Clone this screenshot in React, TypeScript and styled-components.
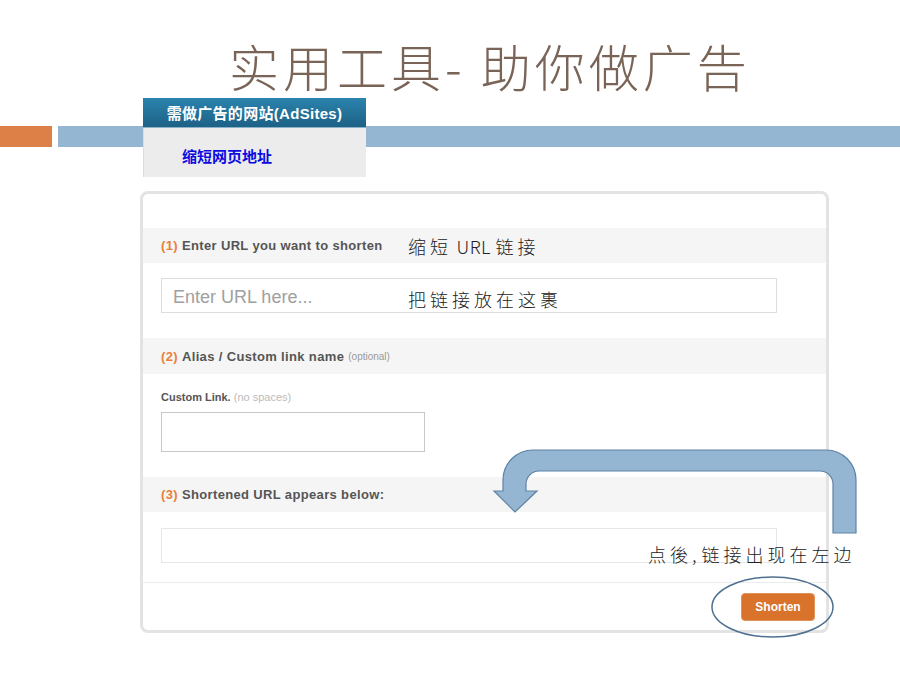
import React from "react";
import styled, { createGlobalStyle } from "styled-components";

const Global = createGlobalStyle`
  html, body { margin: 0; padding: 0; background: #ffffff; }
  body { font-family: "Liberation Sans", Arial, "Noto Sans CJK SC", sans-serif; }
  * { box-sizing: border-box; }
`;

const Slide = styled.div`
  position: relative;
  width: 900px;
  height: 675px;
  overflow: hidden;
  background: #ffffff;
`;

const Title = styled.h1`
  margin: 0;
  height: 98px;
  padding: 38px 0 0 229px;
  font-family: "Noto Sans CJK SC", "Noto Sans CJK JP", sans-serif;
  font-weight: 300;
  font-size: 50px;
  line-height: 54px;
  letter-spacing: 4px;
  color: #7a6457;
  white-space: nowrap;
`;

const HeaderStack = styled.div`
  display: grid;
  height: 79px;
  & > * { grid-area: 1 / 1; }
`;

const Bars = styled.div`
  display: flex;
  gap: 6px;
  margin-top: 28px;
  height: 21px;
  align-self: start;
`;

const Block = styled.div<{ $color: string; $width?: number }>`
  background: ${(p) => p.$color};
  ${(p) => (p.$width ? `width: ${p.$width}px;` : "flex: 1;")}
`;

const Tab = styled.div`
  margin-left: 143px;
  width: 223px;
  display: flex;
  flex-direction: column;
`;

const TabHead = styled.div`
  height: 30px;
  background: linear-gradient(#2b83ad, #1d6186);
  border-bottom: 1px solid #8cb2c8;
  color: #ffffff;
  font-weight: bold;
  font-size: 15px;
  letter-spacing: 0.3px;
  display: flex;
  align-items: center;
  justify-content: center;
  font-family: "Liberation Sans", "Noto Sans CJK SC", sans-serif;
`;

const TabBody = styled.div`
  height: 49px;
  background: #ececec;
  border-left: 1px solid #dcdcdc;
  padding: 18px 0 0 38px;
  display: flex;
  align-items: flex-start;
`;

const TabLink = styled.span`
  color: #0a0ae0;
  font-weight: bold;
  font-size: 15px;
  line-height: 20px;
  font-family: "Noto Sans CJK SC", sans-serif;
`;

const Card = styled.div`
  margin: 14px 0 0 140px;
  width: 689px;
  height: 442px;
  border: 3px solid #e3e3e3;
  border-radius: 8px;
  padding-top: 34px;
  background: #ffffff;
`;

const SectionHead = styled.div<{ $h?: number }>`
  height: ${(p) => p.$h ?? 35}px;
  background: #f5f5f5;
  padding-left: 18px;
  display: flex;
  align-items: center;
  gap: 4px;
  font-size: 13px;
  letter-spacing: 0.35px;
  font-weight: bold;
  color: #555555;
  white-space: nowrap;
`;

const Num = styled.span`
  color: #e8803a;
`;

const Small = styled.span<{ $size?: number; $color?: string }>`
  font-weight: normal;
  letter-spacing: 0;
  font-size: ${(p) => p.$size ?? 10}px;
  color: ${(p) => p.$color ?? "#999999"};
`;

const Field = styled.div<{ $top: number; $bottom: number }>`
  padding: ${(p) => p.$top}px 18px ${(p) => p.$bottom}px;
  display: flex;
  flex-direction: column;
  gap: 8px;
`;

const Label = styled.div`
  font-size: 11px;
  line-height: 14px;
  font-weight: bold;
  color: #555555;
`;

const Input = styled.div<{ $w: number; $h: number; $border: string }>`
  width: ${(p) => p.$w}px;
  height: ${(p) => p.$h}px;
  border: 1px solid ${(p) => p.$border};
  background: #ffffff;
  display: flex;
  align-items: center;
  padding: 3px 0 0 11px;
  font-size: 18px;
  color: #a0a0a0;
`;

const Footer = styled.div`
  border-top: 1px solid #ececec;
  display: flex;
  justify-content: flex-end;
  padding: 10px 11px 0;
`;

const Button = styled.div`
  width: 74px;
  height: 28px;
  border-radius: 4px;
  background: #d9732b;
  border: 1px solid #e0925a;
  color: #ffffff;
  font-weight: bold;
  font-size: 12px;
  display: flex;
  align-items: center;
  justify-content: center;
`;

const Note = styled.div<{ $x: number; $y: number }>`
  position: absolute;
  left: ${(p) => p.$x}px;
  top: ${(p) => p.$y}px;
  font-family: "Noto Sans CJK SC", sans-serif;
  font-weight: 300;
  font-size: 18px;
  line-height: 24px;
  letter-spacing: 4px;
  color: #222222;
  white-space: nowrap;
`;

const Tight = styled.span`
  letter-spacing: 0.5px;
`;

const Overlay = styled.svg`
  position: absolute;
  left: 0;
  top: 0;
  pointer-events: none;
`;

export default function App() {
  return (
    <>
      <Global />
      <Slide>
        <Title>实用工具- 助你做广告</Title>
        <HeaderStack>
          <Bars>
            <Block $color="#dd8047" $width={52} />
            <Block $color="#94b6d2" />
          </Bars>
          <Tab>
            <TabHead>需做广告的网站(AdSites)</TabHead>
            <TabBody>
              <TabLink>缩短网页地址</TabLink>
            </TabBody>
          </Tab>
        </HeaderStack>
        <Card>
          <SectionHead>
            <Num>(1)</Num> Enter URL you want to shorten
          </SectionHead>
          <Field $top={15} $bottom={25}>
            <Input $w={616} $h={35} $border="#dddddd">Enter URL here...</Input>
          </Field>
          <SectionHead $h={36}>
            <Num>(2)</Num> Alias / Custom link name <Small>(optional)</Small>
          </SectionHead>
          <Field $top={16} $bottom={25}>
            <Label>
              Custom Link. <Small $size={11} $color="#bbbbbb">(no spaces)</Small>
            </Label>
            <Input $w={264} $h={40} $border="#c8c8c8" />
          </Field>
          <SectionHead>
            <Num>(3)</Num> Shortened URL appears below:
          </SectionHead>
          <Field $top={16} $bottom={19}>
            <Input $w={616} $h={35} $border="#e6e6e6" />
          </Field>
          <Footer>
            <Button>Shorten</Button>
          </Footer>
        </Card>
        <Overlay width={900} height={675} viewBox="0 0 900 675">
          <path
            d="M 856 533 L 856 480 A 30 30 0 0 0 826 450 L 533 450 A 30 30 0 0 0 503 480 L 503 491 L 494 491 L 515 512 L 537 491 L 526 491 L 526 484 A 13 13 0 0 1 539 471 L 820 471 A 13 13 0 0 1 833 484 L 833 533 Z"
            fill="#94b6d2"
            stroke="#5f82a3"
            strokeWidth={1.2}
          />
          <ellipse cx={772.5} cy={607} rx={60.5} ry={30} fill="none" stroke="#4f7090" strokeWidth={1.5} />
        </Overlay>
        <Note $x={408} $y={234}>
          缩短<Tight> URL </Tight>链接
        </Note>
        <Note $x={408} $y={287}>把链接放在这裹</Note>
        <Note $x={648} $y={542}>
          点後<Tight>, </Tight>链接出现在左边
        </Note>
      </Slide>
    </>
  );
}
